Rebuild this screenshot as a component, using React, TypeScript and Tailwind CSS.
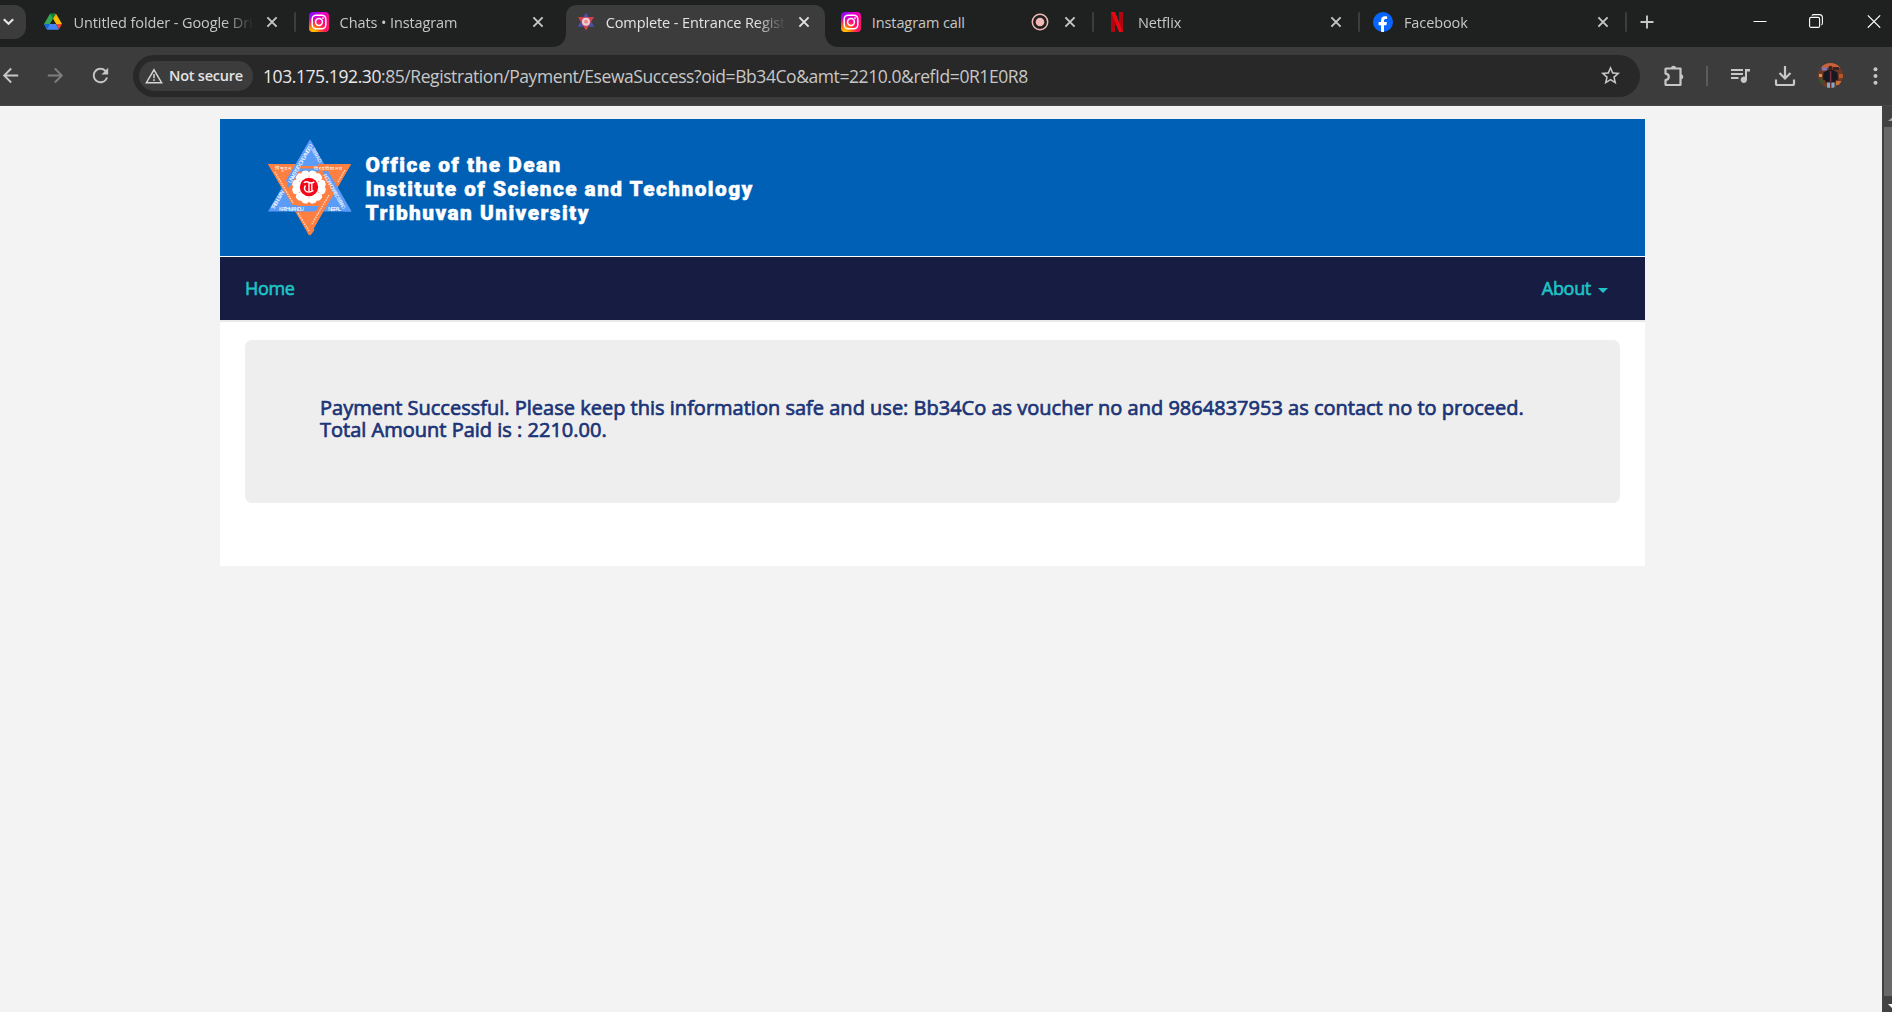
import type { ReactNode } from "react";
import { MdArrowBack, MdArrowForward, MdRefresh, MdStarOutline } from "react-icons/md";

function DriveIcon() {
  return (
    <svg width="20" height="20" viewBox="0 0 20 20">
      <path d="M7 1.8h6L7.2 11.8 4.2 17 1 11.9z" fill="#34a853" />
      <path d="M7 1.8h6L10 7z" fill="#188038" />
      <path d="M13 1.8l6 10.1h-6L10 7z" fill="#fbbc04" />
      <path d="M7 12h6l3 5.8H4.1L1 12z" fill="#4285f4" />
      <path d="M1 12h6l-3 5.2z" fill="#1967d2" />
      <path d="M13 12h6l-3 5.2z" fill="#ea4335" />
      <path d="M10 7l3 5H7z" fill="#1f2120" />
    </svg>
  );
}

function InstagramIcon({ id }: { id: string }) {
  return (
    <svg width="20" height="20" viewBox="0 0 20 20">
      <defs>
        <linearGradient id={id + "a"} x1="0" y1="0" x2="1" y2="1">
          <stop offset="0" stopColor="#6a10ff" />
          <stop offset="0.35" stopColor="#e600d2" />
          <stop offset="0.7" stopColor="#ff0a7c" />
          <stop offset="1" stopColor="#ff1f5a" />
        </linearGradient>
        <radialGradient id={id + "b"} cx="0.2" cy="1.02" r="0.75">
          <stop offset="0" stopColor="#ffd600" />
          <stop offset="0.35" stopColor="#ff8a00" />
          <stop offset="0.75" stopColor="#ff2a4d" stopOpacity="0.7" />
          <stop offset="1" stopColor="#ff0a7c" stopOpacity="0" />
        </radialGradient>
      </defs>
      <rect width="20" height="20" rx="4" fill={`url(#${id}a)`} />
      <rect width="20" height="20" rx="4" fill={`url(#${id}b)`} />
      <rect x="3.2" y="3.2" width="13.6" height="13.6" rx="4" fill="none" stroke="#fff" strokeWidth="1.5" />
      <circle cx="10" cy="10" r="3.4" fill="none" stroke="#fff" strokeWidth="1.5" />
      <circle cx="14" cy="6.1" r="0.9" fill="#fff" />
    </svg>
  );
}

function StarFavicon() {
  return (
    <svg width="20" height="20" viewBox="0 0 20 20">
      <path d="M11 1L3 14.500h16z" fill="#4b50b0" />
      <path d="M3 5h16l-8 13.500z" fill="#cf4450" />
      <path d="M3 14.500L5.300 10.500 7.500 14.500zM19 14.500l-2.300-4-2.200 4zM8.500 5L11 1l2.500 4z" fill="#4b50b0" />
      <circle cx="11" cy="9.700" r="4" fill="#f0cdd2" />
      <circle cx="11" cy="9.700" r="1.900" fill="#e08a92" />
    </svg>
  );
}

function NetflixIcon() {
  return (
    <svg width="20" height="20" viewBox="0 0 20 20">
      <path d="M4 0h4v20l-4 .2zM12 0h4v20.2l-4-.2z" fill="#b1060f" />
      <path d="M4 0h4l8 20.2-4-.3z" fill="#e50914" />
    </svg>
  );
}

function FacebookIcon() {
  return (
    <svg width="20" height="20" viewBox="0 0 20 20">
      <circle cx="10" cy="10" r="10" fill="#0866ff" />
      <path
        d="M8 19.8v-6.6H5.6V10H8V8.6c0-3 1.4-4.4 4.2-4.4.6 0 1.4.1 1.9.2v2.7c-.3 0-.7-.1-1.2-.1-1.4 0-1.9.5-1.9 1.9V10h2.9l-.5 3.2H11v6.7z"
        fill="#fff"
      />
    </svg>
  );
}

function CloseIcon({ color }: { color: string }) {
  return (
    <svg width="12" height="12" viewBox="0 0 12 12" stroke={color} strokeWidth="1.9">
      <path d="M1.4 1.4l9.2 9.2M10.6 1.4l-9.2 9.2" />
    </svg>
  );
}

function Tab({ icon, title, active, separator, recording }: {
  icon: ReactNode;
  title: string;
  active?: boolean;
  separator?: boolean;
  recording?: boolean;
}) {
  return (
    <div className="relative flex h-[47px] w-[266.1px] shrink-0 items-center pl-3 pb-[3px]">
      {active && (
        <svg className="absolute left-[-11px] top-0" width="288" height="47" viewBox="0 0 288 47">
          <path d="M0 47C9 47 14 41 14 33V17Q14 5 26 5H261Q273 5 273 17V33C273 41 278 47 287 47Z" fill="#3c3c3c" />
        </svg>
      )}
      <div className="relative h-5 w-5 shrink-0">{icon}</div>
      <div
        className={
          "relative ml-[10.5px] mt-px overflow-hidden whitespace-nowrap text-[14.5px] leading-[22px] tracking-[-0.1px] " +
          (recording ? "w-[150px] " : "w-[178px] [mask-image:linear-gradient(to_right,#000_150px,transparent_180px)] ") +
          (active ? "text-[#e3e3e3]" : "text-[#c7c7c7]")
        }
      >
        {title}
      </div>
      {recording && (
        <svg className="relative ml-[9.5px] shrink-0" width="18" height="18" viewBox="0 0 18 18">
          <circle cx="9" cy="9" r="7.7" fill="none" stroke="#f2b8b5" strokeWidth="1.5" />
          <circle cx="9" cy="9" r="4.3" fill="#f2b8b5" />
        </svg>
      )}
      <div className="relative ml-auto mr-[19px]">
        <CloseIcon color={active ? "#e3e3e3" : "#c7c7c7"} />
      </div>
      {separator && <div className="absolute right-[1px] top-[12px] h-[20px] w-[2px] rounded bg-[#3c3e3d]" />}
    </div>
  );
}

function TabStrip() {
  return (
    <div className="flex h-[47px] shrink-0 bg-[#1f2120]">
      <div className="mt-[5px] flex h-[34px] w-[26px] items-center rounded-r-[12px] bg-[#3c3c3c]">
        <svg width="16" height="16" viewBox="0 0 16 16" fill="none" stroke="#e3e3e3" strokeWidth="2.2">
          <path d="M3.8 5.2l4.700 4.600 4.700-4.600" />
        </svg>
      </div>
      <div className="ml-[5px] flex">
        <Tab icon={<DriveIcon />} title="Untitled folder - Google Drive" separator />
        <Tab icon={<InstagramIcon id="ig1" />} title="Chats • Instagram" />
        <Tab icon={<StarFavicon />} title="Complete - Entrance Registration" active />
        <Tab icon={<InstagramIcon id="ig2" />} title="Instagram call" recording separator />
        <Tab icon={<NetflixIcon />} title="Netflix" separator />
        <Tab icon={<FacebookIcon />} title="Facebook" separator />
      </div>
      <svg className="ml-[12px] mt-[15px]" width="14" height="14" viewBox="0 0 14 14" stroke="#c7c7c7" strokeWidth="1.9">
        <path d="M7 .5v13M.5 7h13" />
      </svg>
      <div className="ml-auto mr-[11px] mt-[14px] flex h-[14px] items-center">
        <svg width="14" height="14" viewBox="0 0 14 14" stroke="#fff" strokeWidth="1">
          <path d="M.5 7.500h13" />
        </svg>
        <svg className="ml-[42px]" width="14" height="14" viewBox="0 0 14 14" fill="none" stroke="#fff" strokeWidth="1.100">
          <rect x=".6" y="3.400" width="10" height="10" rx="1.500" />
          <path d="M3 1.600Q3.400.6 5 .6h5.400q3 0 3 3v5.400q0 1.600-1 2" />
        </svg>
        <svg className="ml-[44px]" width="14" height="14" viewBox="0 0 14 14" stroke="#fff" strokeWidth="1.200">
          <path d="M.8 1.300l12.400 12.400M13.200 1.300L.8 13.700" />
        </svg>
      </div>
    </div>
  );
}

function Avatar() {
  return (
    <svg width="25" height="25" viewBox="0 0 25 25">
      <clipPath id="avatar">
        <circle cx="12.500" cy="12.500" r="12.500" />
      </clipPath>
      <g clipPath="url(#avatar)">
        <rect width="25" height="25" fill="#6e3a26" />
        <path d="M0 0h25v4.500l-9 1-16-1z" fill="#c9623a" />
        <path d="M4 4.500h5v3H4z" fill="#7f77b8" />
        <path d="M15 4h6v3h-6z" fill="#3b2423" />
        <path d="M1 11h3v3H1z" fill="#d8904c" />
        <path d="M21 11h4v4h-4z" fill="#b9562a" />
        <path d="M2 16h4v5H2z" fill="#3f4f2c" />
        <path d="M18 18h5v4h-5z" fill="#c87038" />
        <path d="M9 7.500q3.500-1.500 7 0l3.500 2 .5 7-2.500 1v2h-10v-2L5 16.500l.5-7z" fill="#17191f" />
        <path d="M11.800 8h1.600v11h-1.600z" fill="#7b2b42" />
        <circle cx="12.500" cy="5" r="2.200" fill="#3a2422" />
        <path d="M9 19.500h3V25H9zM13.500 19.500h3V25h-3z" fill="#7fa6d0" />
      </g>
    </svg>
  );
}

function Toolbar() {
  return (
    <div className="flex h-[59px] shrink-0 items-center border-b border-[#474747] bg-[#3c3c3c] pb-[1px] text-[#c7c7c7]">
      <MdArrowBack size={23} className="ml-[-1px]" />
      <MdArrowForward size={23} className="ml-[22px] text-[#7e7e7e]" />
      <MdRefresh size={23} className="ml-[22px]" />
      <div className="ml-[21px] flex h-[42px] w-[1507px] items-center rounded-full bg-[#282828] pl-[6px]">
        <div className="flex h-[30px] w-[114px] items-center rounded-full bg-[#3c3c3c] pl-[6px]">
          <svg width="18" height="16" viewBox="0 0 18 16" fill="none" stroke="#d5d5d5" strokeWidth="1.5">
            <path d="M9 1.800l7.600 12.900H1.400z" />
            <path d="M9 6v4.300M9 11.300v1.700" />
          </svg>
          <span className="ml-[6px] whitespace-nowrap text-[14.5px] font-semibold tracking-[-0.22px] text-[#e3e3e3]">Not secure</span>
        </div>
        <div className="ml-[10px] whitespace-nowrap text-[17.5px] leading-6 tracking-[-0.42px] text-[#c7c7c7]">
          <span className="text-[#e8e8e8]">103.175.192.30</span>
          :85/Registration/Payment/EsewaSuccess?oid=Bb34Co&amp;amt=2210.0&amp;refId=0R1E0R8
        </div>
        <MdStarOutline size={23} className="ml-auto mr-[18px]" />
      </div>
      <svg className="ml-[23px]" width="22" height="22" viewBox="0 0 22 22" fill="none" stroke="#c7c7c7" strokeWidth="2.2" strokeLinejoin="round">
        <path d="M3 3.500h14.500v16.500H3q-.5 0-.5-.500v-4.500q3.300-.3 3.300-3.200t-3.300-3.200V4q0-.5.500-.5z" />
        <path d="M8 3a2.500 2.300 0 0 1 5 0zM18 9.300a2.300 2.500 0 0 1 0 5z" fill="#c7c7c7" stroke="none" />
      </svg>
      <div className="ml-[21px] h-[20px] w-[2px] bg-[#5c5c5c]" />
      <svg className="ml-[22px]" width="22" height="18" viewBox="0 0 22 18" fill="#c7c7c7">
        <path d="M1 2h12v2H1zM1 6h12v2H1zM1 10h7.500v2H1z" />
        <path d="M15 2h5v2.600h-3v8.200a3.200 3.200 0 1 1-2-2.950z" />
      </svg>
      <svg className="ml-[22px]" width="22" height="22" viewBox="0 0 22 22" fill="none" stroke="#c7c7c7" strokeWidth="2.2">
        <path d="M11 1v12M5.500 8l5.500 5.500L16.500 8M2 14.500v4q0 1.500 1.500 1.500h15q1.500 0 1.500-1.500v-4" />
      </svg>
      <div className="ml-[22px]">
        <Avatar />
      </div>
      <svg className="ml-[30px]" width="5" height="18" viewBox="0 0 5 18" fill="#c7c7c7">
        <circle cx="2.500" cy="2.200" r="2" />
        <circle cx="2.500" cy="9" r="2" />
        <circle cx="2.500" cy="15.800" r="2" />
      </svg>
    </div>
  );
}

function UniversityLogo() {
  return (
    <svg width="84" height="98" viewBox="0 0 84 98" fontFamily="Liberation Sans, sans-serif" fill="#fff">
      <path d="M0 25H83L41 96.500z" fill="#fd7f41" />
      <path d="M42 .5L0 72.500H83.500z" fill="#5b9cf8" />
      <path d="M0 25h9L46.500 91l-4 5.500z" fill="#fd7f41" />
      <path d="M50 25h33L46.500 88l-4-7L66 42z" fill="#fd7f41" />
      <path d="M50 25h33L63 60z" fill="#fd7f41" />
      <path d="M0 25h25l-11 23.500z" fill="#fd7f41" />
      <path d="M26 66l16 30.500L53 76l-4-4H28z" fill="#fd7f41" />
      <path d="M42 .5L18 42l6 4L48 10zM22 66h28l-3 6.500H22z" fill="#5b9cf8" />
      <path d="M53 32h7L83.500 72.500h-8z" fill="#5b9cf8" />
      <path d="M32 27h19L65 49 54 67H29L19 48z" fill="#fd7f41" />
      <path d="M31 31h20M20 48L31 29" stroke="#5b9cf8" strokeWidth="3" />
      {[0, 60, 120, 180, 240, 300].map((angle) => (
        <path key={angle} transform={`rotate(${angle + 30} 41 48)`} d="M41 44l-7-7.500q-1-4 3-5 2-1 4 .8 2-1.800 4-.8 4 1 3 5z" />
      ))}
      <circle cx="41" cy="48" r="10.500" />
      <circle cx="41" cy="48" r="9.200" fill="#f5071a" />
      <path d="M35.800 43.800q2.500-1.800 5-.4t5.500-.6M37.500 46.500q-2.300 3.500.5 5.800 3.500 1.700 7.500-.8M41 44v8M43.800 44v7.500" fill="none" stroke="#fff" strokeWidth="1.400" />
      <text x="11" y="71.500" fontSize="5.500" textLength="25">KATHMANDU</text>
      <text x="60" y="71.500" fontSize="5.500" textLength="13">NEPAL</text>
      <text transform="translate(6 71) rotate(-60)" fontSize="5.500" textLength="21">TRIBHUVAN</text>
      <text transform="translate(23 44.500) rotate(-60)" fontSize="5.500" textLength="44">UNIVERSITY ORGANISED</text>
      <text transform="translate(43 10) rotate(60)" fontSize="5" textLength="17">1959 A.D.</text>
      <text transform="translate(55 36) rotate(60)" fontSize="5" textLength="40">INCORPORATED 1959 A.D.</text>
      <text x="7" y="30.500" fontSize="5" textLength="16" fontFamily="Noto Sans, sans-serif">त्रिभुवन</text>
      <text x="46" y="30.500" fontSize="5" textLength="28" fontFamily="Noto Sans, sans-serif">विश्वविद्यालय</text>
      <g fill="none" stroke="#ffd9c6" strokeWidth="1.400" strokeDasharray="1.500 1">
        <path d="M7 33l18 31M30 74l11 18M77 31l-7 12M61 56L44 85" />
      </g>
    </svg>
  );
}

function Page() {
  return (
    <div className="w-[1882px] bg-[#f3f3f3] pt-[13px]">
      <div className="ml-[220px] h-[447px] w-[1425px] bg-white">
        <header className="flex h-[137px] bg-[#0060b6] pl-[48px] pt-[20px]">
          <UniversityLogo />
          <div className="ml-[13.5px] mt-[14px] whitespace-nowrap font-['Roboto',sans-serif] text-[20.8px] font-black leading-[24px] tracking-[1.46px] text-white [-webkit-text-stroke:0.5px_#fff]">
            <div>Office of the Dean</div>
            <div>Institute of Science and Technology</div>
            <div>Tribhuvan University</div>
          </div>
        </header>
        <nav className="mt-px flex h-[65px] items-center justify-between border-b-2 border-[#e7e9ea] bg-[#171c43] pb-[2px] pl-[25px] pr-[37px] text-[18px] leading-[18px] tracking-[-0.3px] text-[#1fc4c7] [-webkit-text-stroke:0.6px_#1fc4c7]">
          <span>Home</span>
          <span className="flex items-center">
            About
            <span className="ml-[7px] mt-[5px] border-x-[5px] border-t-[5px] border-x-transparent border-t-[#1fc4c7]" />
          </span>
        </nav>
        <main className="mx-[25px] mt-[18px] h-[163px] rounded-[7px] bg-[#eeeeee] px-[75px] pt-[57px]">
          <h4 className="whitespace-nowrap text-[20px] leading-[22px] tracking-[0.005px] text-[#1b3477] [-webkit-text-stroke:0.7px_#1b3477]">
            Payment Successful. Please keep this information safe and use: Bb34Co as voucher no and 9864837953 as contact no to proceed.
            <br />
            Total Amount Paid is : 2210.00.
          </h4>
        </main>
      </div>
    </div>
  );
}

function Scrollbar() {
  return (
    <div className="flex w-[10px] flex-col overflow-hidden bg-[#424242] pl-[2px]">
      <svg className="ml-[4px] mt-[11px] shrink-0" width="8" height="10" viewBox="0 0 8 10">
        <path d="M0 4L4.500 0 9 4z" fill="#a0a0a0" />
      </svg>
      <div className="h-[869px] w-[8px] shrink-0 bg-[#686868]" />
      <svg className="ml-[4px] mt-[8px] shrink-0" width="8" height="8" viewBox="0 0 8 8">
        <path d="M0 0h9L4.500 4.500z" fill="#fff" />
      </svg>
    </div>
  );
}

export default function App() {
  return (
    <div className="flex h-[1012px] w-[1892px] flex-col overflow-hidden font-['Open_Sans','Noto_Sans',sans-serif]">
      <TabStrip />
      <Toolbar />
      <div className="flex min-h-0 flex-1">
        <Page />
        <Scrollbar />
      </div>
    </div>
  );
}
